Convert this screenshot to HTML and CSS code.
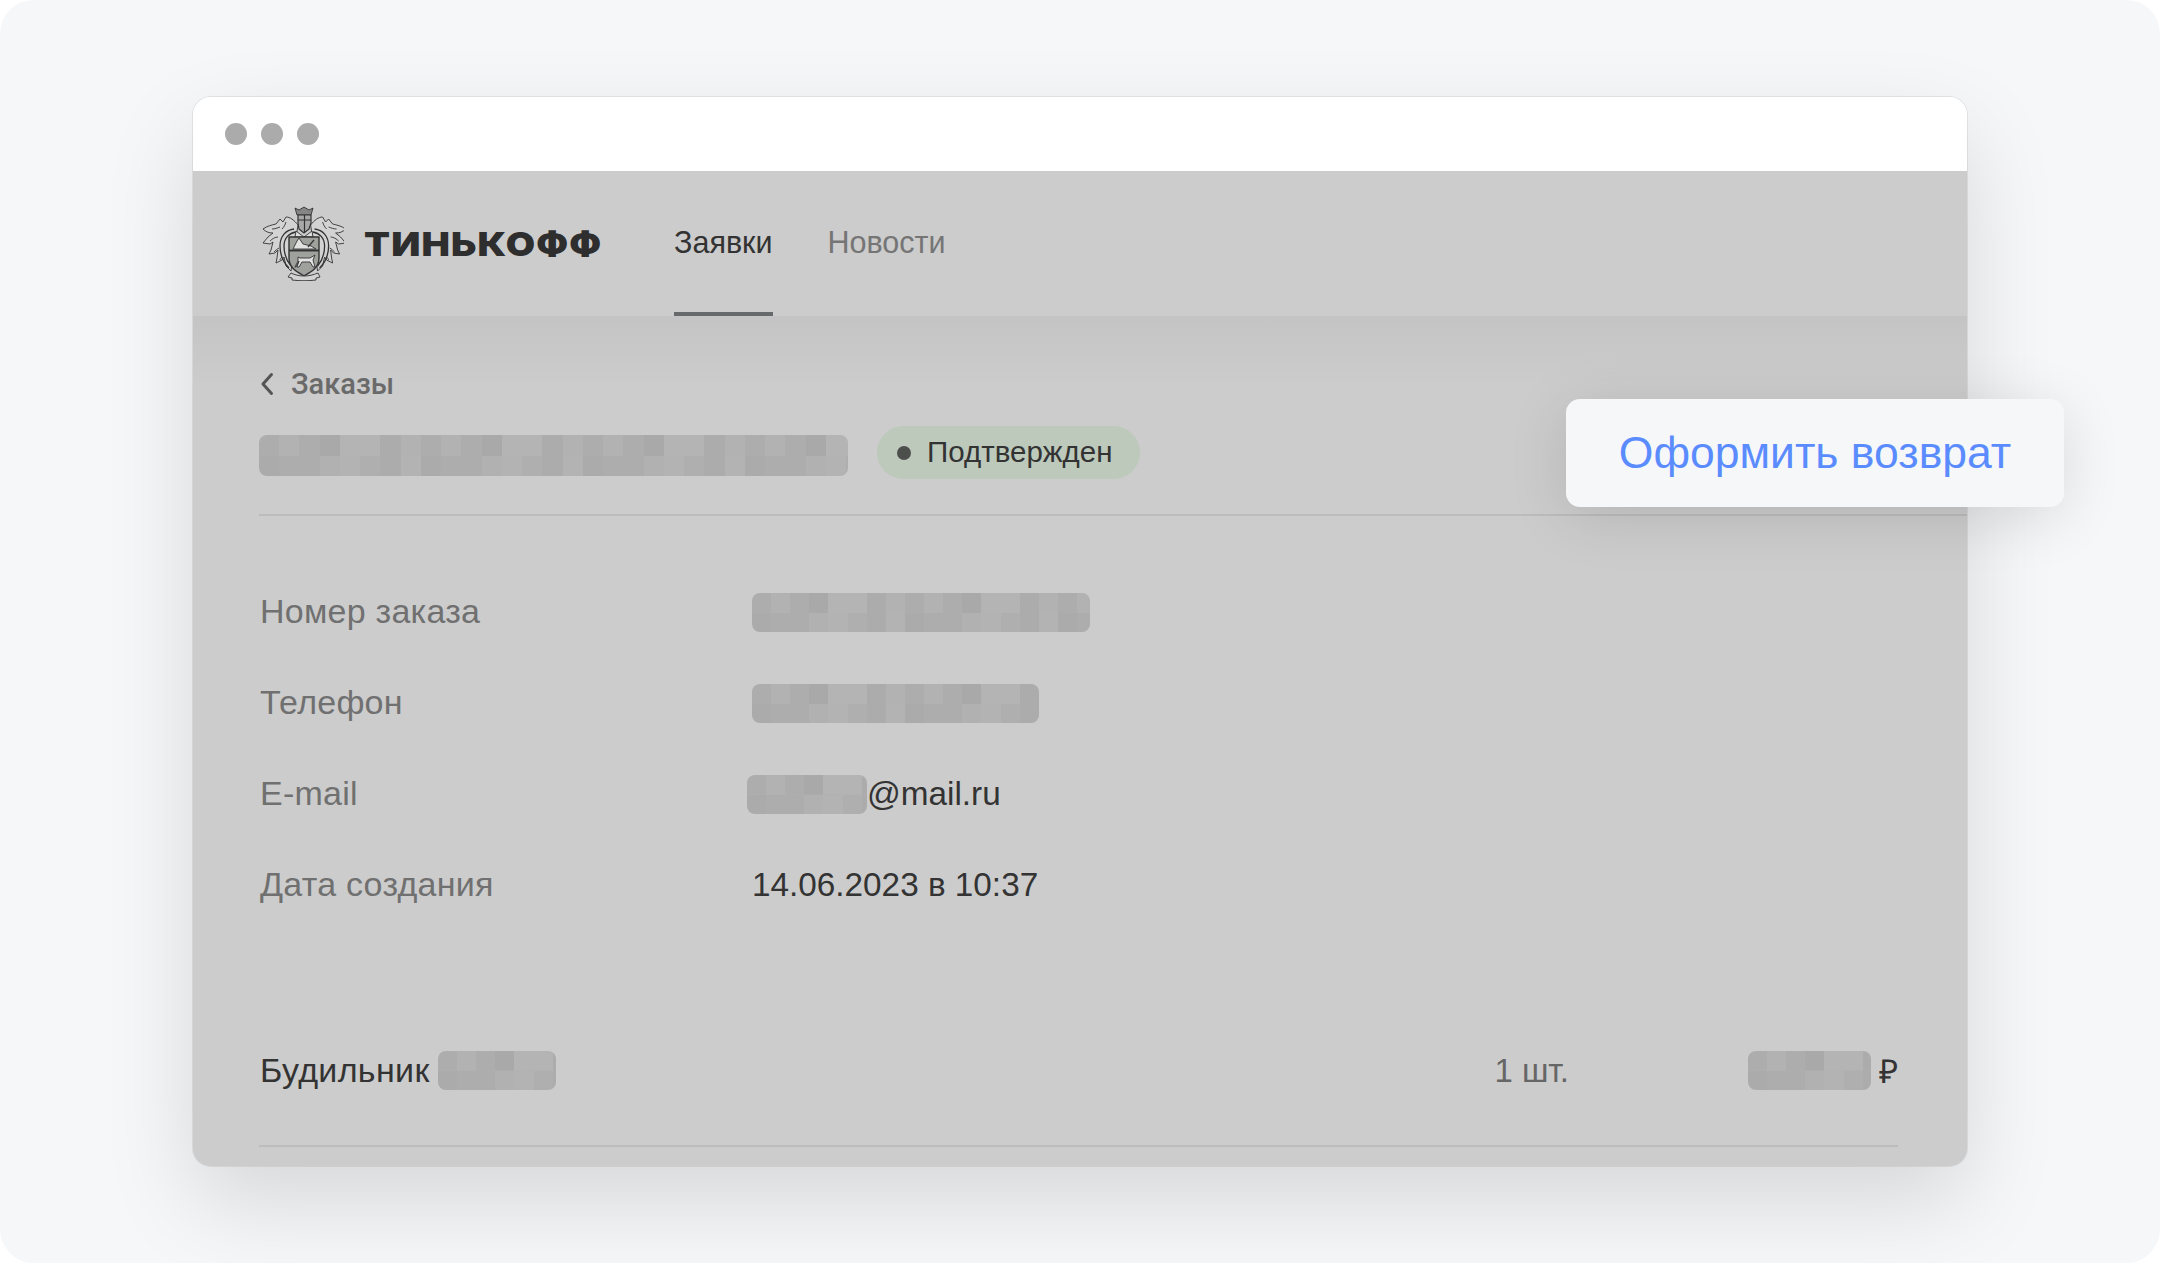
FILE: index.html
```html
<!DOCTYPE html>
<html lang="ru">
<head>
<meta charset="utf-8">
<title>Заказ</title>
<link rel="stylesheet" href="styles.css">
</head>
<body>
<main class="frame">
  <section class="window">
    <div class="titlebar"><i class="dot"></i><i class="dot"></i><i class="dot"></i></div>
    <div class="dim">
      <header class="header">
        <div class="brand">
          <svg class="crest" viewBox="6 6 82 75" aria-hidden="true">
            <defs>
              <g id="mantle">
                <path d="M42 25C38 20 34 17 30 17l-3 5-3-3-4 5c-4 1-9 2-13 5 3 3 6 4 10 4l-5 4-5 6 7 1 3-2-2 8-2 4 6-1 3-3-1 8-1 5 6-3 2-3 2 9 5 5 1-7z" fill="#d3d3d3"/>
                <path d="M38 29c-8 1-14 7-14 17 0 8 3 16 9 22M40 32c-7 1-12 6-12 14 0 8 2 14 7 20" stroke-width="1.300"/>
                <path d="M24 27c-3 1-5 2-8 2M30 22c-1 3-2 5-4 7M22 37c-3 0-6 2-8 4M23 48c-2 1-4 3-5 4M26 57c-1 1-2 2-2 3"/>
              </g>
            </defs>
            <g fill="none" stroke="#333" stroke-width=".9" stroke-linejoin="round">
              <use href="#mantle"/>
              <use href="#mantle" transform="translate(96.600 0) scale(-1 1)"/>
              <path d="M41 15l-2-7 4 2 5-3 5 3 4-2-2 7z" fill="#858585"/>
              <path d="M42 15h13v8l-2 6-5 4-5-4-1-6z" fill="#a8a8a8" stroke-width="1.200"/>
              <path d="M42 20h13M48.500 15v17" stroke-width="1.200"/>
              <path d="M40 31l8 6 8-6 1 6H39z" fill="#dedede"/>
              <path d="M33 37h30v21c0 10-8 14-15 18-7-4-15-8-15-18z" fill="#9fa19c" stroke-width="1.400"/>
              <path d="M33 50.500h30" stroke-width="1.900"/>
              <path d="M37 49l4-8 2-3 4 6 8 2 5 3z" fill="#e2e2e2"/>
              <path d="M52 47l6-7" stroke-width="1.200"/>
              <path d="M39 67l3-6v-4l2 1h10l5-3-2 5 2 7h-2l-3-5h-8l-3 5h-2l2-6-3 6z" fill="#e2e2e2"/>
              <path d="M35 73c4 2 8 3 13 3s9-1 14-3l2 4-4 1v2c-8 1-16 1-24 0v-2l-4-1z" fill="#d3d3d3"/>
            </g>
          </svg>
          <span class="wordmark">ТИНЬКОФФ</span>
        </div>
        <nav class="tabs">
          <a class="tab tab--active">Заявки</a>
          <a class="tab">Новости</a>
        </nav>
      </header>
      <div class="content">
        <a class="back">
          <svg class="chevron" viewBox="0 0 14 24" aria-hidden="true"><path d="M11.500 2.500L3 12l8.500 9.500" fill="none" stroke="#555" stroke-width="3" stroke-linecap="round" stroke-linejoin="round"/></svg>
          <span>Заказы</span>
        </a>
        <div class="title-row">
          <span class="blur blur--title"></span>
          <span class="badge"><i class="badge-dot"></i><span class="badge-text">Подтвержден</span></span>
        </div>
        <dl class="details">
          <dt>Номер заказа</dt><dd><span class="blur blur--order"></span></dd>
          <dt>Телефон</dt><dd><span class="blur blur--phone"></span></dd>
          <dt>E-mail</dt><dd class="email"><span class="blur blur--mail"></span><span class="value-text">@mail.ru</span></dd>
          <dt>Дата создания</dt><dd><span class="value-text">14.06.2023 в 10:37</span></dd>
        </dl>
        <div class="item">
          <span class="item-name">Будильник</span>
          <span class="blur blur--model"></span>
          <span class="item-qty">1 шт.</span>
          <span class="blur blur--price"></span>
          <span class="item-rub">₽</span>
        </div>
      </div>
    </div>
    <button class="return">Оформить возврат</button>
  </section>
</main>
</body>
</html>
```
FILE: styles.css
```css
* { box-sizing: border-box; }
html, body { margin: 0; height: 100%; background: #fff; }
body { font-family: "Liberation Sans", Arial, sans-serif; color: #333; overflow: hidden; }

.frame {
  width: 2160px;
  height: 1263px;
  padding: 97px 193px 0;
  background: #f6f7f9;
  border-radius: 34px;
  overflow: hidden;
}

.window {
  position: relative;
  width: 1774px;
  height: 1069px;
  display: flex;
  flex-direction: column;
  border-radius: 18px;
  box-shadow: 0 0 0 1px rgba(0, 0, 0, .07), 0 36px 90px rgba(0, 0, 0, .13);
}

.titlebar {
  flex: 0 0 74px;
  display: flex;
  align-items: center;
  gap: 14px;
  padding-left: 32px;
  background: #fff;
  border-radius: 18px 18px 0 0;
}
.dot { width: 22px; height: 22px; border-radius: 50%; background: #ababab; }

.dim {
  flex: 1;
  background: #ccc;
  border-radius: 0 0 18px 18px;
}

.header {
  height: 145px;
  display: flex;
  padding-left: 69px;
}
.brand { display: flex; align-items: center; gap: 20px; width: 412px; }
.crest { width: 82px; height: 75px; flex: none; }
.wordmark {
  font-family: Inter, "Liberation Sans", sans-serif;
  font-weight: 900;
  font-size: 33px;
  letter-spacing: 1px;
  color: #2e2e2e;
  transform: scaleX(1.147);
  transform-origin: left center;
}
.tabs { display: flex; gap: 55px; }
.tab {
  display: flex;
  align-items: center;
  height: 145px;
  padding-bottom: 2px;
  font-size: 30.5px;
  color: #757575;
}
.tab--active { color: #333; box-shadow: inset 0 -4px 0 #666a6a; }

.content {
  height: 850px;
  padding: 52px 69px 0 66px;
  border-radius: 0 0 18px 18px;
  background: linear-gradient(#c4c4c4, #ccc 70px);
}

.back {
  display: flex;
  align-items: center;
  gap: 17px;
  height: 32px;
  padding-left: 1px;
  font-family: Roboto, "Liberation Sans", sans-serif;
  font-size: 29px;
  font-weight: 500;
  color: #6a6a6a;
}
.chevron { width: 14px; height: 24px; }

.title-row {
  display: flex;
  align-items: center;
  gap: 29px;
  margin-right: -69px;
  padding: 26px 0 35px;
  border-bottom: 2px solid #bcbcbc;
}

.blur {
  display: inline-block;
  flex: none;
  height: 39px;
  border-radius: 8px;
  background-color: #b0b0b0;
  background-image:
    linear-gradient(90deg, #adadad 0 12.5%, #b2b2b2 0 25%, #adadad 0 37.5%, #a9a9a9 0 50%, #b4b4b4 0 75%, #acacac 0 87.5%, #b2b2b2 0),
    linear-gradient(90deg, #ababab 0 12.5%, #adadad 0 37.5%, #b1b1b1 0 50%, #b3b3b3 0 62.5%, #afafaf 0 75%, #acacac 0 87.5%, #b3b3b3 0);
  background-size: 153px 50%;
  background-repeat: repeat-x;
  background-position: 0 0, 0 100%;
}
.blur--title { width: 589px; height: 41px; margin-top: 6px; background-size: 162px 50%; }
.blur--order { width: 338px; }
.blur--phone { width: 287px; }
.blur--mail { width: 120px; margin-left: -5px; }
.blur--model { width: 118px; margin-left: 8px; }
.blur--price { width: 123px; }

.badge {
  display: flex;
  align-items: center;
  gap: 16px;
  width: 263px;
  height: 53px;
  padding-left: 20px;
  border-radius: 27px;
  background: #bcc9bb;
  font-size: 29.5px;
  color: #333;
}
.badge-dot { width: 14px; height: 14px; border-radius: 50%; background: #4d4f4d; }
.badge-text { margin-bottom: 2px; }

.details {
  display: grid;
  grid-template-columns: 493px 1fr;
  grid-auto-rows: 91px;
  align-items: center;
  margin: 51px 0 0;
  font-size: 33.3px;
}
.details dt { padding: 0 0 2px 1px; font-size: 34px; letter-spacing: .25px; color: #707070; }
.details dd { margin: 0; display: flex; align-items: center; color: #333; }
.value-text { margin-bottom: 2px; }

.item {
  display: flex;
  align-items: center;
  height: 151px;
  margin-top: 65px;
  font-size: 34px;
  border-bottom: 2px solid #bcbcbc;
}
.item-name { padding-left: 1px; letter-spacing: .35px; }
.item-qty { margin-left: auto; margin-right: 179px; color: #666; font-size: 33px; }
.item-rub { margin-left: 8px; font-size: 33px; }

.return {
  position: absolute;
  left: 1373px;
  top: 302px;
  width: 498px;
  height: 108px;
  border: 0;
  border-radius: 14px;
  background: #f6f7f9;
  color: #5b8cff;
  font-family: "Liberation Sans", Arial, sans-serif;
  font-size: 44.5px;
  box-shadow: 0 10px 60px rgba(0, 0, 0, .12);
}
```
